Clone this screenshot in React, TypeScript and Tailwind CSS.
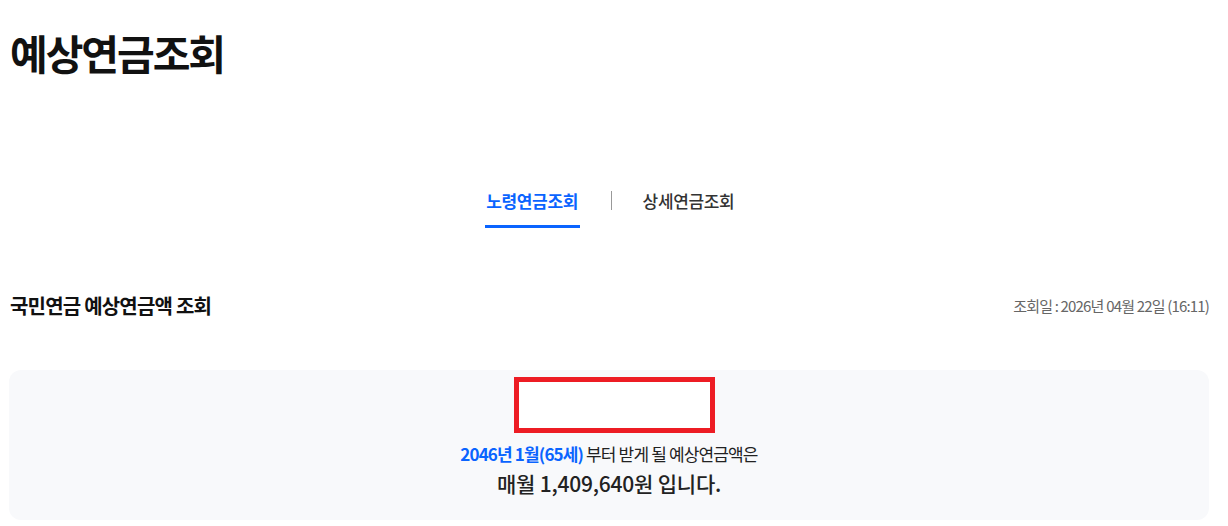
const font = { fontFamily: '"Noto Sans CJK KR", "Noto Sans", sans-serif' };

export default function App() {
  return (
    <div className="min-h-screen bg-white pl-[10px] pr-[19px] text-[#111]" style={font}>
      <h1 className="pt-[24px] text-[41px] font-bold leading-[56px] tracking-[-0.05em] text-[#111]">
        예상연금조회
      </h1>

      <div className="mt-[109px] flex items-start justify-center">
        <div className="flex flex-col items-center">
          <button className="text-[17px] font-semibold leading-[24px] tracking-[-0.02em] text-[#0a64ff]">
            노령연금조회
          </button>
          <div className="mt-[12px] h-[3px] w-[95px] bg-[#0a64ff]" />
        </div>
        <div className="mx-[31px] mt-[2px] h-[19px] w-px bg-[#999]" />
        <button className="text-[17px] font-medium leading-[24px] tracking-[-0.02em] text-[#333]">
          상세연금조회
        </button>
      </div>

      <div className="mt-[64px] flex items-center justify-between">
        <h2 className="text-[20px] font-bold leading-[28px] tracking-[-0.04em] text-[#111]">
          국민연금 예상연금액 조회
        </h2>
        <span className="text-[15px] leading-[20px] tracking-[-0.055em] text-[#666]">
          조회일 : 2026년 04월 22일 (16:11)
        </span>
      </div>

      <div className="mt-[50px] -ml-px flex flex-col items-center rounded-[12px] bg-[#f8f9fb] pb-[22px]">
        <div className="ml-[10px] mt-[7px] h-[56px] w-[201px] border-[5px] border-[#ed1c24] bg-white" />
        <p className="mt-[9px] text-[17px] leading-[24px] tracking-[-0.05em] text-[#222]">
          <span className="font-bold text-[#0a64ff]">2046년 1월(65세)</span> 부터 받게 될 예상연금액은
        </p>
        <p className="mt-[2px] text-[21px] font-medium leading-[30px] tracking-[-0.01em] text-[#222]">
          매월 1,409,640원 입니다.
        </p>
      </div>
    </div>
  );
}
